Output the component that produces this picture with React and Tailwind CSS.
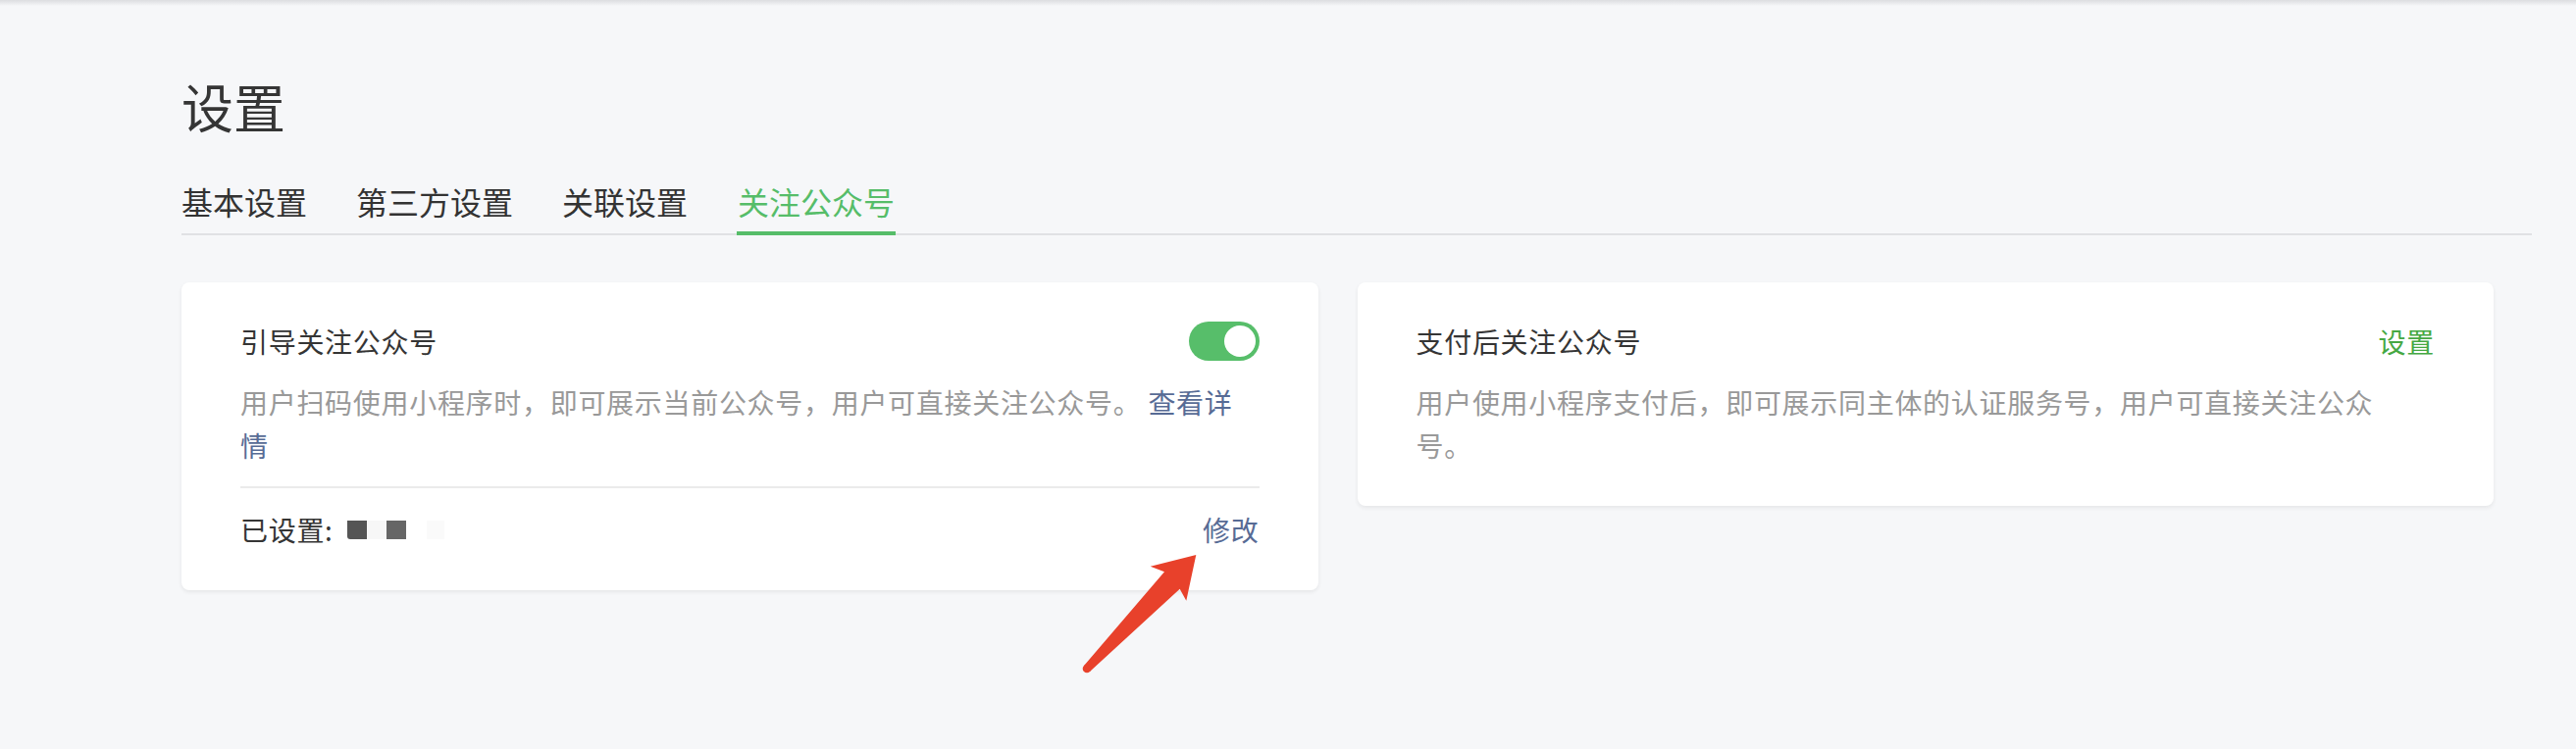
import React from 'react';

const tabs = ['基本设置', '第三方设置', '关联设置', '关注公众号'];

function Toggle() {
  return (
    <div className="w-[72px] h-[40px] rounded-full bg-[#57be6a] flex items-center justify-end px-[4px] shrink-0">
      <div className="w-[32px] h-[32px] rounded-full bg-white" />
    </div>
  );
}

function Arrow() {
  return (
    <svg
      className="absolute left-[906px] top-[267px] pointer-events-none"
      width="140"
      height="140"
      viewBox="0 0 140 140"
    >
      <polygon
        points="14,124 96,28.3 81.7,22.7 128.3,11 118.3,57.7 111.7,45.7 20,130"
        fill="#e8412b"
        strokeLinejoin="round"
      />
      <circle cx="17" cy="127" r="4.3" fill="#e8412b" />
    </svg>
  );
}

export default function App() {
  return (
    <div className="min-h-[764px] bg-[#f6f7f9] font-['Noto_Sans_CJK_SC',sans-serif] relative">
      {/* top bar shadow */}
      <div className="h-[6px] bg-gradient-to-b from-[#dcdde0] to-[#f6f7f9]" />

      <div className="pl-[185px] pt-[76px] w-[2581px]">
        <h1 className="text-[53px] leading-[53px] text-[#353535] font-normal">设置</h1>

        {/* Tabs */}
        <div className="mt-[54px] flex items-start gap-[50px] border-b-2 border-[#e0e1e4]">
          {tabs.map((tab, i) =>
            i === tabs.length - 1 ? (
              <div
                key={tab}
                className="text-[32px] leading-[32px] text-[#56bd69] pb-[15px] border-b-4 border-[#56bd69] -mb-[2px] px-[1px]"
              >
                {tab}
              </div>
            ) : (
              <div key={tab} className="text-[32px] leading-[32px] text-[#333] pb-[17px]">
                {tab}
              </div>
            )
          )}
        </div>

        {/* Cards */}
        <div className="mt-[48px] w-[2357px] grid grid-cols-2 gap-[40px] items-start">
          <div className="relative bg-white rounded-[8px] shadow-[0_2px_4px_rgba(0,0,0,0.07)] px-[60px] pt-[40px] pb-[40px]">
            <div className="flex items-center justify-between h-[40px]">
              <span className="text-[28px] leading-[40px] text-[#353535] tracking-[0.7px]">引导关注公众号</span>
              <Toggle />
            </div>
            <p className="mt-[20px] pr-[10px] text-[28px] leading-[44px] text-[#999] tracking-[0.7px]">
              用户扫码使用小程序时，即可展示当前公众号，用户可直接关注公众号。{' '}
              <a className="text-[#576b95]">查看详情</a>
            </p>
            <div className="mt-[20px] h-[2px] bg-[#ebebeb]" />
            <div className="mt-[20px] flex items-center justify-between h-[44px]">
              <div className="flex items-center">
                <span className="text-[28px] leading-[44px] text-[#353535] tracking-[0.7px]">已设置:</span>
                <div className="ml-[14px] flex items-center">
                  <span className="w-[20px] h-[19px] bg-[#555] rounded-bl-[3px]" />
                  <span className="w-[20px] h-[19px] bg-[#f7f7f7]" />
                  <span className="w-[20px] h-[19px] bg-[#666]" />
                  <span className="ml-[21px] w-[18px] h-[19px] bg-[#fafafa]" />
                </div>
              </div>
              <a className="text-[28px] leading-[44px] text-[#576b95] tracking-[0.7px]">修改</a>
            </div>
            <Arrow />
          </div>

          <div className="bg-white rounded-[8px] shadow-[0_2px_4px_rgba(0,0,0,0.07)] px-[60px] pt-[40px] pb-[40px]">
            <div className="flex items-center justify-between h-[40px]">
              <span className="text-[28px] leading-[40px] text-[#353535] tracking-[0.7px]">支付后关注公众号</span>
              <a className="text-[28px] leading-[40px] text-[#46a843] tracking-[0.7px]">设置</a>
            </div>
            <p className="mt-[20px] pr-[48px] text-[28px] leading-[44px] text-[#999] tracking-[0.7px]">
              用户使用小程序支付后，即可展示同主体的认证服务号，用户可直接关注公众号。
            </p>
          </div>
        </div>
      </div>
    </div>
  );
}
